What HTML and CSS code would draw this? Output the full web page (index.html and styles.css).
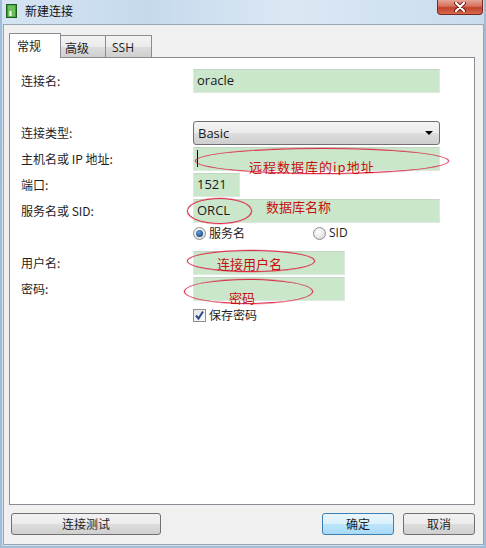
FILE: index.html
```html
<!DOCTYPE html>
<html>
<head>
    <title>新建连接</title>
    <meta http-equiv="content-type" content="text/html; charset=UTF-8"/>
    <link rel="stylesheet" href="styles.css">
</head>
<body>
    <div class="window">
        <div class="titlebar">
            <svg class="app_icon" width="11" height="14" viewBox="0 0 11 14">
                <rect x="0.5" y="0.5" width="10" height="13" fill="#3f9b35" stroke="#1d5e1a"/>
                <rect x="2" y="1.5" width="7" height="11" fill="#6cc25a"/>
                <rect x="3.5" y="7" width="2" height="5" fill="#f4fff0"/>
            </svg>
            <span class="title">新建连接</span>
            <div class="close_btn">
                <svg width="14" height="10" viewBox="0 0 14 10">
                    <path d="M3 1 L11 9 M11 1 L3 9" stroke="#6b1a12" stroke-width="4" stroke-linecap="round"/>
                    <path d="M3 1 L11 9 M11 1 L3 9" stroke="#ffffff" stroke-width="2.2" stroke-linecap="round"/>
                </svg>
            </div>
        </div>
        <div class="dialog">
            <div class="tabs">
                <div class="tab active">常规</div>
                <div class="tab">高级</div>
                <div class="tab tab_ssh">SSH</div>
            </div>
            <div class="panel">
                <div class="row gap_big">
                    <label>连接名:</label>
                    <div class="field">oracle</div>
                </div>
                <div class="row">
                    <label>连接类型:</label>
                    <div class="select">Basic<i class="arrow"></i></div>
                </div>
                <div class="row">
                    <label>主机名或 IP 地址:</label>
                    <div class="field"><i class="caret"></i></div>
                </div>
                <div class="row">
                    <label>端口:</label>
                    <div class="field short">1521</div>
                </div>
                <div class="row no_gap">
                    <label>服务名或 SID:</label>
                    <div class="field">ORCL</div>
                </div>
                <div class="row radio_row">
                    <span></span>
                    <div class="radios">
                        <span class="option first"><i class="radio checked"></i>服务名</span>
                        <span class="option"><i class="radio"></i>SID</span>
                    </div>
                </div>
                <div class="row">
                    <label>用户名:</label>
                    <div class="field mid"></div>
                </div>
                <div class="row gap_check">
                    <label>密码:</label>
                    <div class="field mid"></div>
                </div>
                <div class="row check_row">
                    <span></span>
                    <span class="option">
                        <i class="checkbox">
                            <svg width="11" height="11" viewBox="0 0 11 11"><path d="M2 5.5 L4.5 8.5 L9 1.5" fill="none" stroke="#2c4a86" stroke-width="2"/></svg>
                        </i>保存密码
                    </span>
                </div>

                <!-- 标注 -->
                <div class="mark mark_host"></div>
                <span class="note note_host">远程数据库的ip地址</span>
                <div class="mark mark_sid"></div>
                <span class="note note_sid">数据库名称</span>
                <div class="mark mark_user"></div>
                <span class="note note_user">连接用户名</span>
                <div class="mark mark_pwd"></div>
                <span class="note note_pwd">密码</span>
            </div>
            <div class="buttons">
                <div class="btn btn_test">连接测试</div>
                <div class="btn btn_ok">确定</div>
                <div class="btn btn_cancel">取消</div>
            </div>
        </div>
    </div>
</body>
</html>
```

FILE: styles.css
```css
body{
    margin: 0;
    font-family: "Noto Sans CJK SC", "Noto Sans", sans-serif;
    font-size: 12px;
    color: #1e1e1e;
}
.window{
    width: 486px;
    height: 548px;
    box-sizing: border-box;
    background: linear-gradient(to bottom, #c9dcef 0%, #d9e6f3 40%, #cfdeee 100%);
    border-left: 2px solid #a3bcd6;
    border-right: 2px solid #a3bcd6;
    border-bottom: 2px solid #a3bcd6;
    display: flex;
    flex-direction: column;
}
.titlebar{
    height: 24px;
    display: flex;
    align-items: flex-start;
    background: linear-gradient(to right, #d6e5f3 0%, #c5d9ec 30%, #dce8f4 60%, #c9dcee 100%);
}
.titlebar .app_icon{
    margin: 4px 0 0 4px;
}
.titlebar .title{
    margin: 3px 0 0 8px;
    line-height: 16px;
    color: #111;
}
.close_btn{
    margin-left: auto;
    margin-right: 1px;
    width: 46px;
    height: 15px;
    box-sizing: border-box;
    border: 1px solid #7a2a22;
    border-top: none;
    border-radius: 0 0 4px 4px;
    background: linear-gradient(to bottom, #e6a596 0%, #d6705c 45%, #c2412a 55%, #d66a4c 100%);
    display: flex;
    align-items: center;
    justify-content: center;
}
.dialog{
    flex: 1;
    margin: 0 0 1px 1px;
    width: 481px;
    box-sizing: border-box;
    border: 1px solid #9aa6b2;
    background-color: #f0f0f0;
    padding: 8px 7px 0 5px;
}
.tabs{
    display: flex;
    align-items: flex-end;
    height: 25px;
}
.tab{
    width: 46px;
    height: 22px;
    box-sizing: border-box;
    border: 1px solid #898c95;
    border-bottom: none;
    padding-left: 4px;
    padding-top: 1px;
    display: flex;
    align-items: center;
    background: linear-gradient(to bottom, #f3f3f3 0%, #ebebeb 50%, #dddddd 51%, #cfcfcf 100%);
    margin-bottom: 1px;
    margin-left: -1px;
}
.tab.active{
    width: 52px;
    height: 25px;
    margin: 0;
    padding-left: 7px;
    padding-top: 0;
    background: #fff;
    position: relative;
    z-index: 1;
    padding-bottom: 2px;
}
.tab.tab_ssh{
    width: 47px;
    padding-left: 6px;
    font-family: "Open Sans", "Noto Sans CJK SC", sans-serif;
}
.panel{
    position: relative;
    width: 466px;
    height: 448px;
    margin-top: -1px;
    box-sizing: border-box;
    border: 1px solid #898c95;
    background-color: #fff;
    padding: 11px 0 0 11px;
}
.row{
    display: grid;
    grid-template-columns: 172px auto;
    align-items: center;
    height: 24px;
    margin-bottom: 2px;
}
.row.gap_big{
    margin-bottom: 28px;
}
.row.no_gap{
    margin-bottom: 0;
}
.row.gap_check{
    margin-bottom: 4px;
}
.row.radio_row{
    height: 20px;
    margin-bottom: 8px;
}
.row.check_row{
    height: 20px;
}
.row label{
    line-height: 16px;
}
.field{
    width: 247px;
    height: 24px;
    box-sizing: border-box;
    background-color: #cbe7cb;
    border: 1px solid #dde9dd;
    border-top-color: #c2d6c2;
    padding-left: 3px;
    font-family: "Open Sans", "Noto Sans", sans-serif;
    font-size: 13px;
    line-height: 21px;
    color: #1a1a1a;
}
.field.short{
    width: 47px;
}
.field.mid{
    width: 152px;
}
.caret{
    display: inline-block;
    width: 1px;
    height: 17px;
    margin-top: 2px;
    background-color: #000;
    vertical-align: top;
}
.select{
    width: 247px;
    height: 24px;
    box-sizing: border-box;
    border: 1px solid #707070;
    border-radius: 3px;
    background: linear-gradient(to bottom, #f4f4f4 0%, #ebebeb 50%, #dddddd 51%, #cfcfcf 100%);
    padding: 0 6px 0 4px;
    display: flex;
    align-items: center;
    font-family: "Open Sans", "Noto Sans", sans-serif;
    font-size: 13px;
    color: #1a1a1a;
}
.select .arrow{
    margin-left: auto;
    width: 0;
    height: 0;
    border-left: 4px solid transparent;
    border-right: 4px solid transparent;
    border-top: 4px solid #000;
}
.radios{
    display: flex;
}
.option{
    display: flex;
    align-items: center;
    line-height: 16px;
}
.option.first{
    width: 120px;
}
.radio{
    width: 13px;
    height: 13px;
    box-sizing: border-box;
    border-radius: 50%;
    border: 1px solid #8f8f8f;
    background: radial-gradient(circle at 40% 35%, #ffffff 0%, #e6e6e6 60%, #cfcfcf 100%);
    margin-right: 3px;
    position: relative;
}
.radio.checked::after{
    content: "";
    position: absolute;
    left: 2px;
    top: 2px;
    width: 7px;
    height: 7px;
    border-radius: 50%;
    background: radial-gradient(circle at 40% 35%, #6fa3e0 0%, #1d4f8c 70%, #163e70 100%);
}
.radios .option:last-child{
    font-family: "Open Sans", "Noto Sans CJK SC", sans-serif;
}
.checkbox{
    width: 13px;
    height: 13px;
    box-sizing: border-box;
    border: 1px solid #8e8f8f;
    background: linear-gradient(to bottom right, #e4e4e4, #fcfcfc);
    margin-right: 3px;
    display: flex;
    align-items: center;
    justify-content: center;
}
.mark{
    position: absolute;
    box-sizing: border-box;
    border: 1px solid #dc2c48;
    border-radius: 50%;
    box-shadow: 0 0 0 0.5px rgba(220, 44, 72, 0.45);
}
.mark_host{ left: 185px; top: 90px; width: 254px; height: 26px; }
.mark_sid{ left: 177px; top: 140px; width: 65px; height: 26px; }
.mark_user{ left: 177px; top: 192px; width: 128px; height: 22px; }
.mark_pwd{ left: 174px; top: 221px; width: 129px; height: 25px; }
.note{
    position: absolute;
    color: #c80f0f;
    font-size: 13px;
    line-height: 16px;
    white-space: nowrap;
}
.note_host{ left: 239px; top: 101px; letter-spacing: 1px; }
.note_sid{ left: 256px; top: 141px; }
.note_user{ left: 207px; top: 198px; }
.note_pwd{ left: 219px; top: 232px; }
.buttons{
    display: flex;
    width: 466px;
    margin-top: 8px;
}
.btn{
    height: 22px;
    box-sizing: border-box;
    border: 1px solid #707070;
    border-radius: 3px;
    background: linear-gradient(to bottom, #f2f2f2 0%, #ebebeb 50%, #dddddd 51%, #cfcfcf 100%);
    display: flex;
    align-items: center;
    justify-content: center;
    line-height: 16px;
}
.btn_test{
    width: 150px;
    margin-left: 2px;
}
.btn_ok{
    width: 72px;
    margin-left: auto;
    border-color: #3c7fb1;
    background: linear-gradient(to bottom, #eaf6fd 0%, #d9f0fc 50%, #bee6fd 51%, #a7d9f5 100%);
}
.btn_cancel{
    width: 72px;
    margin-left: 9px;
}
```
